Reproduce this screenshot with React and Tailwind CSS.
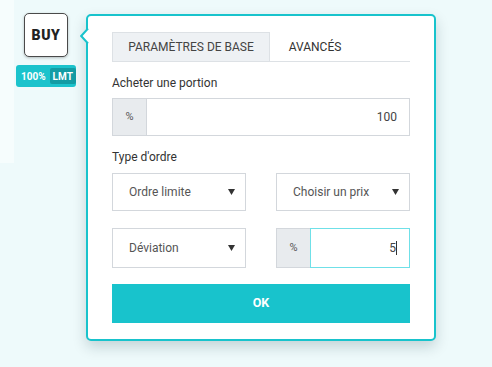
export default function App() {
  const font = { fontFamily: "Roboto, 'Liberation Sans', sans-serif" };
  const Caret = () => (
    <svg width="7" height="6" viewBox="0 0 7 6" className="shrink-0">
      <path d="M0 0 H7 L3.5 6 Z" fill="#333" />
    </svg>
  );
  return (
    <div className="relative w-[492px] h-[367px] overflow-hidden bg-[#eefafb]" style={font}>
      <div className="flex items-start">
        <div className="w-[14px] h-[163px] bg-[#f6fdfd]" />
        <div className="flex flex-col items-center ml-[2px] mt-[13px] w-[60px]">
          <div className="w-[44px] h-[44px] rounded-[5px] border border-[#4a4a4a] bg-white shadow-[0_1px_3px_rgba(0,0,0,0.25)] flex items-center justify-center">
            <span className="text-[14px] font-black text-[#222] tracking-[0.6px]">BUY</span>
          </div>
          <div className="mt-[8px] w-[60px] h-[22px] rounded-[3px] bg-[#1bc3cc] flex items-center pl-[5px] pr-[2px]">
            <span className="text-[10px] font-bold text-white">100%</span>
            <span className="ml-[4px] h-[16px] px-[3px] rounded-[2px] bg-[#139ca4] text-[10px] font-bold text-white flex items-center">LMT</span>
          </div>
        </div>
      </div>

      <div className="absolute left-[86px] top-[14px] w-[350px] h-[327px] bg-white border-2 border-[#18c3cc] rounded-[5px] shadow-[0_6px_14px_rgba(0,40,50,0.18)] px-[24px] pt-[16px]">
        <svg className="absolute left-[-8px] top-[12px]" width="9" height="16" viewBox="0 0 9 16">
          <path d="M9 0 L1 8 L9 16 Z" fill="white" />
          <path d="M8 0.5 L1.2 8 L8 15.5" fill="none" stroke="#18c3cc" strokeWidth="2" />
        </svg>

        <div className="flex border-b border-[#dde1e5] h-[30px]">
          <div className="w-[158px] bg-[#eef1f4] border border-b-0 border-[#dde1e5] flex items-center justify-center text-[12px] text-[#444]">
            PARAMÈTRES DE BASE
          </div>
          <div className="w-[90px] flex items-center justify-center text-[12px] text-[#333]">AVANCÉS</div>
        </div>

        <div className="mt-[14px] text-[12px] text-[#333] leading-[14px]">Acheter une portion</div>
        <div className="mt-[8px] flex h-[38px] border border-[#d3d7dc]">
          <div className="w-[34px] bg-[#e8ebee] border-r border-[#d3d7dc] flex items-center justify-center text-[11px] text-[#555]">%</div>
          <div className="flex-1 flex items-center justify-end pr-[12px] text-[12px] text-[#444]">100</div>
        </div>

        <div className="mt-[14px] text-[12px] text-[#333] leading-[14px]">Type d'ordre</div>
        <div className="mt-[9px] flex justify-between">
          <div className="w-[134px] h-[38px] border border-[#d3d7dc] flex items-center justify-between pl-[16px] pr-[10px] text-[12px] text-[#555]">
            <span>Ordre limite</span>
            <Caret />
          </div>
          <div className="w-[134px] h-[38px] border border-[#d3d7dc] flex items-center justify-between pl-[16px] pr-[10px] text-[12px] text-[#555]">
            <span>Choisir un prix</span>
            <Caret />
          </div>
        </div>
        <div className="mt-[17px] flex justify-between">
          <div className="w-[134px] h-[40px] border border-[#d3d7dc] flex items-center justify-between pl-[16px] pr-[10px] text-[12px] text-[#555]">
            <span>Déviation</span>
            <Caret />
          </div>
          <div className="w-[134px] h-[40px] flex">
            <div className="w-[34px] bg-[#e8ebee] border border-r-0 border-[#d3d7dc] flex items-center justify-center text-[11px] text-[#555]">%</div>
            <div className="flex-1 border border-[#6fe0e8] flex items-center justify-end pr-[12px] text-[12px] text-[#444]">
              5<span className="w-px h-[14px] bg-[#333]" />
            </div>
          </div>
        </div>

        <button className="mt-[16px] w-full h-[39px] bg-[#18c3cc] text-white text-[12.5px] font-bold flex items-center justify-center">
          OK
        </button>
      </div>
    </div>
  );
}
